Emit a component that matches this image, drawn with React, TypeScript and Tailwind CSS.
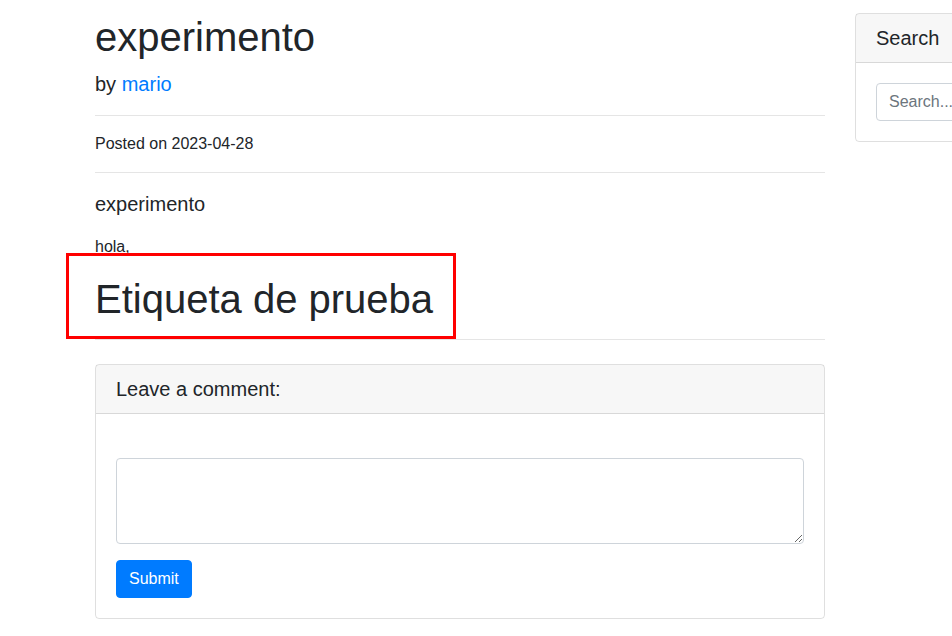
import React from "react";

export default function App() {
  return (
    <div className="w-[952px] h-[636px] overflow-hidden bg-white font-['Liberation_Sans',Arial,sans-serif] text-[#212529]">
      <div className="flex pl-[95px] gap-[30px]">
        <main className="w-[730px] shrink-0 pt-[13px]">
          <h1 className="text-[40px] leading-[1.2] mb-2 font-normal">experimento</h1>
          <p className="text-[20px] leading-[1.5] mb-4">
            by <a className="text-[#007bff]" href="#">mario</a>
          </p>
          <hr className="border-t border-black/10 my-4" />
          <p className="text-base leading-6 mb-4">Posted on 2023-04-28</p>
          <hr className="border-t border-black/10 my-4" />
          <p className="text-[20px] leading-[1.5] mb-4">experimento</p>
          <p className="text-base leading-6 mb-4">hola,</p>
          <div className="relative">
            <h1 className="text-[40px] leading-[1.2] mb-2 font-normal">Etiqueta de prueba</h1>
            <div className="absolute left-[-29px] top-[-22px] w-[390px] h-[86px] border-[3px] border-[#ff0000]" />
          </div>
          <hr className="border-t border-black/10 my-4" />
          <div className="my-6 border border-black/[0.125] rounded-[4px]">
            <div className="bg-black/[0.03] border-b border-black/[0.125] px-5 py-3">
              <h5 className="text-[20px] leading-[1.2] font-normal">Leave a comment:</h5>
            </div>
            <div className="p-5">
              <form className="pt-6">
                <textarea
                  rows={3}
                  className="block w-full h-[86px] border border-[#ced4da] rounded-[4px] px-3 py-1.5 text-base leading-6 mb-4 outline-none"
                />
                <button
                  type="button"
                  className="bg-[#007bff] border border-[#007bff] text-white px-3 py-1.5 text-base leading-6 rounded-[4px]"
                >
                  Submit
                </button>
              </form>
            </div>
          </div>
        </main>
        <aside className="w-[350px] shrink-0 pt-[13px]">
          <div className="border border-black/[0.125] rounded-[4px]">
            <div className="bg-black/[0.03] border-b border-black/[0.125] px-5 py-3">
              <h5 className="text-[20px] leading-[1.2] font-normal">Search</h5>
            </div>
            <div className="p-5 flex">
              <input
                type="text"
                placeholder="Search..."
                className="flex-1 min-w-0 h-[38px] border border-[#ced4da] rounded-l-[4px] px-3 text-base placeholder:text-[#6c757d] outline-none"
              />
              <button
                type="button"
                className="bg-[#6c757d] text-white px-3 h-[38px] rounded-r-[4px]"
              >
                Go!
              </button>
            </div>
          </div>
        </aside>
      </div>
    </div>
  );
}
